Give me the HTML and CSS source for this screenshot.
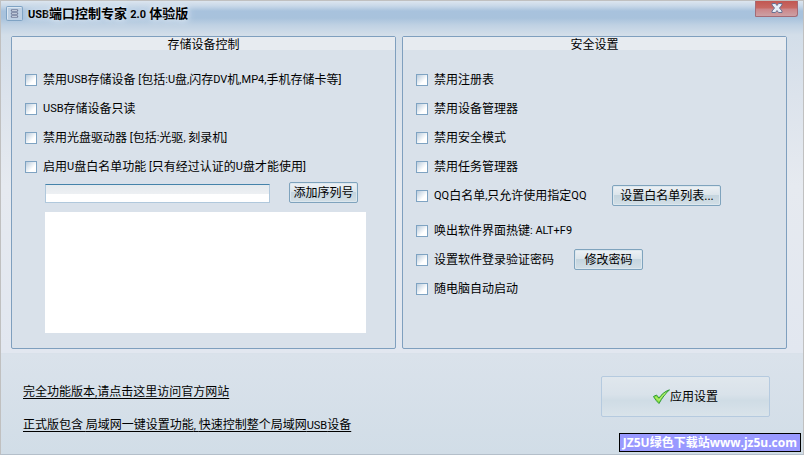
FILE: index.html
```
<!DOCTYPE html>
<html lang="zh-CN">
<head>
    <meta charset="utf-8">
    <title>USB端口控制专家</title>
    <link rel="stylesheet" href="styles.css">
</head>
<body>
    <div class="window">
        <header class="titlebar">
            <svg class="app-icon" width="17" height="15" viewBox="0 0 17 15">
                <rect x="0.5" y="0.5" width="16" height="14" rx="1" fill="#bdd0e4" stroke="#7fa3c4"/>
                <path d="M1.5 13V1.5H15" fill="none" stroke="#dce7f2"/>
                <path d="M6 4.500h5M6 7.500h5M6 10.500h5" stroke="#77809c" stroke-width="2.600" stroke-linecap="round"/>
                <path d="M6 4.500h5M6 7.500h5M6 10.500h5" stroke="#d3dce8" stroke-width=".8"/>
            </svg>
            <h1 class="title"><span class="en">USB</span>端口控制专家 <span class="en">2.0</span> 体验版</h1>
            <button class="close" type="button" aria-label="关闭">
                <svg width="12" height="10" viewBox="0 0 12 10">
                    <path d="M1 .5h3.500L6 2.500 7.500.5H11v1.500L8.500 5 11 8v1.500H7.500L6 7.500 4.500 9.500H1V8l2.500-3L1 2z" fill="#e6edf6" stroke="#697192"/>
                </svg>
            </button>
        </header>

        <main class="panels">
            <section class="panel">
                <h2 class="panel-title">存储设备控制</h2>
                <div class="panel-body">
                    <div class="row"><label><input type="checkbox">禁用<span class="en">USB</span>存储设备<span class="en"> [</span>包括<span class="en">:U</span>盘<span class="en">,</span>闪存<span class="en">DV</span>机<span class="en">,MP4,</span>手机存储卡等<span class="en">]</span></label></div>
                    <div class="row"><label><input type="checkbox"><span class="en">USB</span>存储设备只读</label></div>
                    <div class="row"><label><input type="checkbox">禁用光盘驱动器<span class="en"> [</span>包括<span class="en">:</span>光驱<span class="en">, </span>刻录机<span class="en">]</span></label></div>
                    <div class="row"><label><input type="checkbox">启用<span class="en">U</span>盘白名单功能<span class="en"> [</span>只有经过认证的<span class="en">U</span>盘才能使用<span class="en">]</span></label></div>
                    <div class="serial">
                        <input class="serial-input" type="text" aria-label="序列号">
                        <button class="btn" type="button">添加序列号</button>
                    </div>
                    <textarea class="serial-list" aria-label="序列号列表"></textarea>
                </div>
            </section>

            <section class="panel">
                <h2 class="panel-title">安全设置</h2>
                <div class="panel-body">
                    <div class="row"><label><input type="checkbox">禁用注册表</label></div>
                    <div class="row"><label><input type="checkbox">禁用设备管理器</label></div>
                    <div class="row"><label><input type="checkbox">禁用安全模式</label></div>
                    <div class="row"><label><input type="checkbox">禁用任务管理器</label></div>
                    <div class="row row-list">
                        <label><input type="checkbox"><span class="en">QQ</span>白名单<span class="en">,</span>只允许使用指定<span class="en">QQ</span></label>
                        <button class="btn btn-wide" type="button">设置白名单列表...</button>
                    </div>
                    <div class="row"><label><input type="checkbox">唤出软件界面热键<span class="en">: ALT+F9</span></label></div>
                    <div class="row row-password">
                        <label><input type="checkbox">设置软件登录验证密码</label>
                        <button class="btn" type="button">修改密码</button>
                    </div>
                    <div class="row"><label><input type="checkbox">随电脑自动启动</label></div>
                </div>
            </section>
        </main>

        <footer class="footer">
            <div class="links">
                <a href="#">完全功能版本<span class="en">,</span>请点击这里访问官方网站</a>
                <a href="#">正式版包含<span class="en"> </span>局域网一键设置功能<span class="en">, </span>快速控制整个局域网<span class="en">USB</span>设备</a>
            </div>
            <button class="apply" type="button">
                <svg width="17" height="15" viewBox="0 0 17 15">
                    <path d="M.5 7.500L3.500 6 6 9C8.500 5.500 11.500 2.500 16.500.8 12.500 4.500 9 9 6 14.500 4.500 13 2 10.500.5 7.500z" fill="#8be03c" stroke="#2f9a3c" stroke-linejoin="round"/>
                    <path d="M2.500 8l3.500 3.500C8 8.500 10 6 12.500 4" fill="none" stroke="#c3f48b"/>
                </svg>
                <span>应用设置</span>
            </button>
        </footer>

        <div class="watermark">JZ5U绿色下载站www.jz5u.com</div>
    </div>
</body>
</html>
```
FILE: styles.css
```
* {
    box-sizing: border-box;
}

body {
    margin: 0;
    font-family: Roboto, "Noto Sans CJK SC", sans-serif;
    font-size: 12px;
    line-height: 16px;
    color: #000;
}

button, input, textarea {
    font: inherit;
    color: inherit;
}

/* Latin text is drawn a little smaller than the Chinese */
.en {
    font-size: 11px;
    white-space: pre;
}

.window {
    position: relative;
    min-height: 100vh;
    border: 1px solid #c0c0c0;
    border-bottom-color: #b4bfca;
    background: linear-gradient(#d9e1ea, #d9e1ea 353px, #dae2eb 353px, #d1dde7);
}

/* Title bar */
.titlebar {
    display: flex;
    align-items: flex-start;
    height: 35px;
    padding: 5px 5px 0;
    background: linear-gradient(#dce5ef, #c8d8e8 5px, #a8c2dd 10px, #a8c2dc 17px, #bfd1e3 24px, #d3dee9 34px);
}

.title {
    flex: 1;
    margin: 0 0 0 5px;
    font-size: 13px;
    font-weight: bold;
    text-shadow: 0 0 5px #e8f0f8, 0 0 8px #e8f0f8;
}

.close {
    display: flex;
    align-items: center;
    justify-content: center;
    width: 43px;
    height: 16px;
    margin-top: -5px;
    padding: 0 0 1px;
    border: 1px solid #a36b76;
    border-top: 0;
    border-radius: 0 0 3px 1px;
    background: linear-gradient(#c15752, #c86963 7px, #cb8588 8px, #cda0a5);
}

/* Panels */
.panels {
    display: grid;
    grid-template-columns: 1fr 1fr;
    gap: 6px;
    padding: 0 16px 4px 10px;
    background: linear-gradient(#d3dee9, #dce3ec 60px, #e6eaf0 150px, #e2e7f0);
}

.panel {
    border: 1px solid #7f9fbe;
    border-radius: 2px;
    background: #d9e1ea;
}

.panel-title {
    height: 13px;
    margin: 0;
    background: #e7ebf0;
    font-size: 12px;
    font-weight: normal;
    line-height: 17px;
    text-align: center;
}

.panel-body {
    padding: 15px 13px;
}

.row {
    display: flex;
    align-items: center;
    height: 29px;
}

.row label {
    display: flex;
    align-items: center;
    line-height: 18px;
    white-space: nowrap;
}

.row input {
    appearance: none;
    width: 12px;
    height: 12px;
    margin: 0 6px 0 0;
    border: 1px solid #7fa3c2;
    background: linear-gradient(135deg, #b9cbdc, #fff 65%);
}

.row-list {
    gap: 26px;
    margin-bottom: 6px;
}

.row-password {
    gap: 20px;
}

.btn {
    width: 69px;
    height: 21px;
    padding: 0;
    border: 1px solid #7fa3bd;
    border-radius: 2px;
    background: linear-gradient(#edf1f5, #dce5eb 45%, #c5d5df 50%, #d3dfe6);
    box-shadow: inset 0 0 0 1px #dce7ee;
    line-height: 18px;
    white-space: nowrap;
}

.btn-wide {
    width: 109px;
}

.serial {
    display: flex;
    align-items: flex-end;
    gap: 19px;
    padding: 1px 0 0 20px;
}

.serial-input {
    width: 225px;
    height: 19px;
    border: 1px solid #b0c8dc;
    border-top-color: #4583aa;
    background: linear-gradient(#e5eaee, #edf0f3 9px, #fff 9px);
}

.serial-list {
    display: block;
    width: calc(100% - 36px);
    height: 121px;
    margin: 9px 0 0 20px;
    border: 0;
    background: #fff;
    resize: none;
}

/* Footer */
.footer {
    display: flex;
    justify-content: space-between;
    padding: 23px 33px 0 22px;
}

.links {
    display: flex;
    flex-direction: column;
    align-items: flex-start;
    gap: 16px;
    padding-top: 8px;
}

.links a {
    color: #000;
    text-underline-offset: 2px;
}

.apply {
    display: flex;
    align-items: center;
    justify-content: center;
    width: 169px;
    height: 41px;
    border: 1px solid #b5cadf;
    border-radius: 2px;
    background: linear-gradient(#e0e7ed, #d9e2ea 45%, #cfdce5 60%, #d9e3ea);
}

.watermark {
    position: absolute;
    right: 2px;
    bottom: 2px;
    height: 19px;
    padding: 0 3px;
    border: 1px solid #000;
    background: #9999ff;
    color: #fff;
    font-family: "Open Sans", "Noto Sans CJK SC", sans-serif;
    font-size: 12px;
    font-weight: bold;
    line-height: 18px;
    white-space: nowrap;
}
```
